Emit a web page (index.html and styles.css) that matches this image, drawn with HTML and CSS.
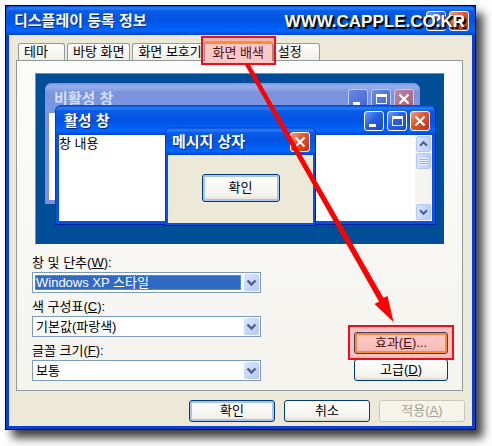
FILE: index.html
```html
<!DOCTYPE html>
<html lang="ko">
<head>
    <meta charset="UTF-8">
    <meta name="viewport" content="width=device-width, initial-scale=1.0">
    <title>디스플레이 등록 정보</title>
    <link rel="stylesheet" href="styles.css">
</head>
<body>

<!-- shared icons -->
<svg class="icons" width="0" height="0" aria-hidden="true">
    <symbol id="i_min" viewBox="0 0 18 18"><path d="M4 12h7v3H4z" fill="#fff"/></symbol>
    <symbol id="i_max" viewBox="0 0 18 18"><path d="M4 4h11v10H4zM5 7v6h9V7z" fill="#fff" fill-rule="evenodd"/></symbol>
    <symbol id="i_close" viewBox="0 0 18 18"><path d="M4.500 4.500l9 9M13.500 4.500l-9 9" stroke="#fff" stroke-width="2.200" fill="none"/></symbol>
    <symbol id="i_down" viewBox="0 0 15 15"><path d="M3.500 5.500l4 4 4-4" stroke="#4d6185" stroke-width="2.400" fill="none"/></symbol>
    <symbol id="i_up" viewBox="0 0 15 15"><path d="M3.500 9.500l4-4 4 4" stroke="#4d6185" stroke-width="2.400" fill="none"/></symbol>
</svg>

<main class="dialog">
    <header class="titlebar">
        <h1>디스플레이 등록 정보</h1>
        <button class="ctl help" type="button" aria-label="도움말">?</button>
        <button class="ctl close" type="button" aria-label="닫기"><svg><use href="#i_close"/></svg></button>
        <span class="watermark">WWW.CAPPLE.CO.KR</span>
    </header>

    <div class="content">
        <div class="tabs" role="tablist">
            <button class="tab tab_theme" type="button" role="tab">테마</button>
            <button class="tab" type="button" role="tab">바탕 화면</button>
            <button class="tab tab_saver" type="button" role="tab">화면 보호기</button>
            <div class="marked tab_mark">
                <button class="tab active" type="button" role="tab" aria-selected="true">화면 배색</button>
            </div>
            <button class="tab tab_last" type="button" role="tab">설정</button>
        </div>

        <section class="panel">
            <div class="preview">
                <div class="win inactive">
                    <div class="win_title">
                        <span>비활성 창</span>
                        <button class="ctl" type="button" aria-label="최소화"><svg><use href="#i_min"/></svg></button>
                        <button class="ctl" type="button" aria-label="최대화"><svg><use href="#i_max"/></svg></button>
                        <button class="ctl close" type="button" aria-label="닫기"><svg><use href="#i_close"/></svg></button>
                    </div>
                    <div class="win_body"></div>
                </div>
                <div class="win current">
                    <div class="win_title">
                        <span>활성 창</span>
                        <button class="ctl" type="button" aria-label="최소화"><svg><use href="#i_min"/></svg></button>
                        <button class="ctl" type="button" aria-label="최대화"><svg><use href="#i_max"/></svg></button>
                        <button class="ctl close" type="button" aria-label="닫기"><svg><use href="#i_close"/></svg></button>
                    </div>
                    <div class="win_body">
                        <span>창 내용</span>
                        <div class="scrollbar">
                            <button class="sb" type="button" aria-label="위로"><svg><use href="#i_up"/></svg></button>
                            <div class="thumb"><i></i></div>
                            <button class="sb sb_down" type="button" aria-label="아래로"><svg><use href="#i_down"/></svg></button>
                        </div>
                    </div>
                </div>
                <div class="win message">
                    <div class="win_title">
                        <span>메시지 상자</span>
                        <button class="ctl close" type="button" aria-label="닫기"><svg><use href="#i_close"/></svg></button>
                    </div>
                    <div class="win_body">
                        <button class="btn default" type="button">확인</button>
                    </div>
                </div>
            </div>

            <div class="settings">
                <form class="fields">
                    <label for="style">창 및 단추(<u>W</u>):</label>
                    <div class="combo focus">
                        <select id="style"><option>Windows XP 스타일</option></select>
                        <svg class="drop"><use href="#i_down"/></svg>
                    </div>
                    <label for="scheme">색 구성표(<u>C</u>):</label>
                    <div class="combo">
                        <select id="scheme"><option>기본값(파랑색)</option></select>
                        <svg class="drop"><use href="#i_down"/></svg>
                    </div>
                    <label for="size">글꼴 크기(<u>F</u>):</label>
                    <div class="combo">
                        <select id="size"><option>보통</option></select>
                        <svg class="drop"><use href="#i_down"/></svg>
                    </div>
                </form>
                <div class="side">
                    <div class="marked btn_mark">
                        <button class="btn hot" type="button">효과(<u>E</u>)...</button>
                    </div>
                    <button class="btn" type="button">고급(<u>D</u>)</button>
                </div>
            </div>
        </section>

        <footer class="actions">
            <button class="btn default" type="button">확인</button>
            <button class="btn" type="button">취소</button>
            <button class="btn" type="button" disabled>적용(<u>A</u>)</button>
        </footer>
    </div>

    <!-- pointer from the tab to the effects button -->
    <svg class="arrow" width="470" height="424" viewBox="6 6 470 424" aria-hidden="true">
        <path d="M244.500 64h5L383.500 298l4-2 6 26-19-18 4.500-2.500z" fill="#f00"/>
    </svg>
</main>

</body>
</html>
```

FILE: styles.css
```css
* {
  box-sizing: border-box;
}

body {
  margin: 0;
  padding: 5px 16px 16px 5px;
  background: #fff;
  color: #000;
  font: 13px/18px "Liberation Sans", "Noto Sans CJK KR", sans-serif;
}

button, select {
  font: inherit;
  color: inherit;
  margin: 0;
  padding: 0;
}

.icons {
  position: absolute;
}

.dialog {
  position: relative;
  border: 1px solid #000;
  background: #0a3fd0;
  box-shadow: 7px 8px 9px rgba(0, 0, 0, .75);
}

/* title bars */
.titlebar, .win_title {
  display: flex;
  align-items: center;
  gap: 3px;
  color: #fff;
  font-size: 15px;
  font-weight: bold;
  text-shadow: 1px 1px 0 #0a2a80;
  background: linear-gradient(#0a4fd0 0, #2a80f8 7%, #0a5ae6 18%, #0054e3 50%, #0066ff 85%, #0045c8 100%);
}

.titlebar {
  position: relative;
  height: 29px;
  padding: 0 6px 0 8px;
  border-radius: 6px 6px 0 0;
}

.titlebar h1, .win_title span:first-child {
  flex: 1;
  margin: 0;
  font-size: 15px;
  white-space: nowrap;
}

.ctl {
  flex: none;
  width: 20px;
  height: 20px;
  border: 1px solid #fff;
  border-radius: 3px;
  background: linear-gradient(135deg, #6a9cf5, #2a5fe0 45%, #1b48c8);
}

.ctl svg {
  display: block;
  width: 18px;
  height: 18px;
}

.ctl.close {
  background: linear-gradient(135deg, #f0a080, #e0532c 45%, #bd3410);
}

.ctl.help {
  color: #fff;
  font-size: 17px;
  font-weight: bold;
}

.watermark {
  position: absolute;
  right: 10px;
  top: 7px;
  font-size: 17px;
  font-weight: bold;
  text-shadow: 2px 2px 1px #000, 1px 1px 0 #000;
}

.content {
  margin: 0 3px 3px;
  padding: 6px 0 4px;
  background: #ece9d8;
}

/* tabs */
.tabs {
  display: flex;
  align-items: flex-end;
  height: 19px;
  padding: 0 9px;
}

.tab {
  height: 17px;
  line-height: 16px;
  margin-right: 2px;
  padding: 0 5px;
  border: 1px solid #919b9c;
  border-bottom: 0;
  border-radius: 3px 3px 0 0;
  background: linear-gradient(#fff, #f0efe6);
  white-space: nowrap;
}

.tab_theme {
  padding: 0 16px 0 5px;
}

.tab_saver {
  margin-right: 0;
  padding-right: 2px;
  border-right: 0;
}

.tab_last {
  padding: 0 17px 0 4px;
}

.tab.active {
  width: 69px;
  height: 20px;
  margin: 0;
  border-top: 3px solid #ffa53c;
  background: #fcfcfb;
}

.marked {
  position: relative;
}

.tab_mark {
  height: 19px;
  z-index: 1;
}

.marked::after {
  content: "";
  position: absolute;
  border: 2px solid #e8101c;
  background: rgba(255, 60, 60, .28);
  pointer-events: none;
}

.tab_mark::after {
  inset: -5px -3px;
}

.btn_mark::after {
  inset: -7px -6px -6px;
}

.panel {
  margin: 0 9px 0 7px;
  padding: 12px 14px 9px 15px;
  border: 1px solid #919b9c;
  background: linear-gradient(#fcfcfb, #f4f3ee);
}

/* sample desktop */
.preview {
  position: relative;
  height: 172px;
  margin: 0 3px 9px;
  overflow: hidden;
  border: 1px solid #8a9080;
  border-color: #8a8f86 #fff #fff #8a8f86;
  background: #004e98;
}

.win {
  position: absolute;
  display: flex;
  flex-direction: column;
  padding: 0 3px 3px;
  border: 1px solid #0831d9;
  border-color: #0a48d8 #001ea0 #001ea0 #0831d9;
  border-radius: 6px 6px 0 0;
  background: #0b50e4;
}

.win_title {
  flex: none;
  height: 29px;
  margin: 0 -3px;
  padding: 0 5px 0 8px;
  border-radius: 5px 5px 0 0;
}

.win_body {
  flex: 1;
  display: flex;
  justify-content: space-between;
  background: #fff;
}

.inactive {
  left: 9px;
  top: 9px;
  width: 375px;
  height: 121px;
  border-color: #7b93dc;
  background: #7b8fdd;
}

.inactive .win_title {
  color: #d5e0f8;
  text-shadow: none;
  background: linear-gradient(#8aa0e8 0, #97aeea 10%, #7b93de 30%, #7d98e2 100%);
}

.inactive .ctl {
  border-color: #c0cdf3;
  background: linear-gradient(135deg, #6a8be5, #4063d8);
}

.inactive .ctl.close {
  background: linear-gradient(135deg, #b98aa8, #a85a70);
}

.current {
  left: 19px;
  top: 31px;
  width: 381px;
  height: 120px;
}

.message {
  left: 129px;
  top: 53px;
  width: 151px;
  height: 99px;
  padding: 0 2px 2px;
}

.message .win_title {
  height: 27px;
  margin: 0 -2px;
  padding: 0 5px 0 6px;
}

.message .win_body {
  justify-content: center;
  align-items: center;
  padding-bottom: 3px;
  background: #ece9d8;
}

.message .btn {
  width: 78px;
  height: 28px;
}

.scrollbar {
  display: flex;
  flex-direction: column;
  gap: 1px;
  width: 17px;
  padding: 1px;
  background: #f5f4f0;
}

.sb, .thumb {
  height: 16px;
  border: 1px solid #b5c7f0;
  border-radius: 2px;
  background: linear-gradient(90deg, #d6e2ff, #b9ccf8);
}

.sb svg {
  display: block;
  width: 13px;
  height: 14px;
}

.sb_down {
  margin-top: auto;
}

.thumb {
  padding: 4px 3px;
}

.thumb i {
  display: block;
  height: 7px;
  background: repeating-linear-gradient(#eef4fe 0 1px, #8cb0f8 1px 2px);
}

/* drop-downs and side buttons */
.settings {
  display: flex;
  justify-content: space-between;
  align-items: flex-end;
}

.fields {
  width: 229px;
}

.fields label {
  display: block;
}

.combo {
  display: flex;
  height: 21px;
  margin-bottom: 5px;
  padding: 1px;
  border: 1px solid #7f9db9;
  background: #fff;
}

.combo:last-child {
  margin-bottom: 0;
}

.combo select {
  flex: 1;
  appearance: none;
  margin: 1px;
  padding: 0 1px;
  border: 0;
  outline: 0;
  background: #fff;
  line-height: 15px;
}

.combo.focus select {
  color: #fff;
  background: #316ac5;
  outline: 1px dotted #d0963a;
  outline-offset: -1px;
}

.drop {
  width: 15px;
  height: 17px;
  margin-left: 2px;
  border-radius: 2px;
  background: linear-gradient(135deg, #dbe6ff, #b4c8f6);
}

.side {
  display: flex;
  flex-direction: column;
  gap: 5px;
}

.side .btn {
  display: block;
  width: 94px;
}

.btn {
  width: 86px;
  height: 22px;
  border: 1px solid #003c74;
  border-radius: 3px;
  background: linear-gradient(#fff, #f3f2ec 80%, #dfdbd0);
  line-height: 18px;
}

.btn.default {
  box-shadow: inset 0 0 0 2px #a9c3f0;
}

.btn.hot {
  box-shadow: inset 0 0 0 2px #f5a83c;
}

.btn:disabled {
  border-color: #c9c7ba;
  background: #f5f4ea;
  color: #a1a192;
}

.actions {
  display: flex;
  justify-content: flex-end;
  gap: 9px;
  padding: 9px 7px 0 0;
}

.arrow {
  position: absolute;
  left: 0;
  top: 0;
  z-index: 2;
  pointer-events: none;
}
```
